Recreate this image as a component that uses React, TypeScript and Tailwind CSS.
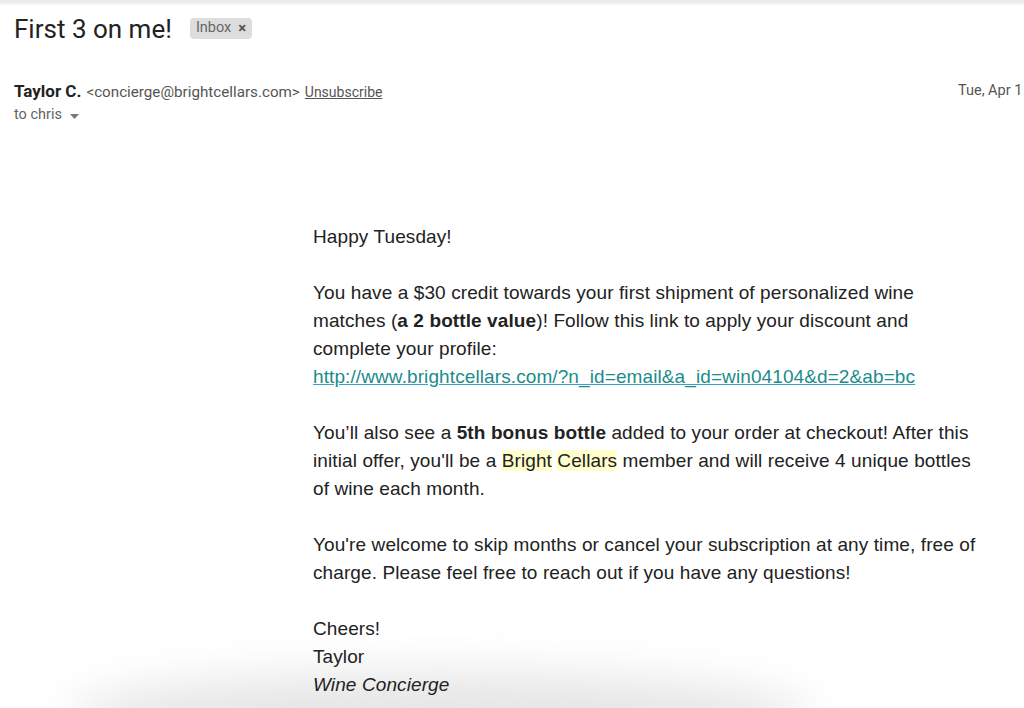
import React from "react";

export default function App() {
  return (
    <div className="relative w-[1024px] h-[708px] overflow-hidden bg-white font-['Liberation_Sans',Arial,sans-serif] text-[#222]">
      <div className="pointer-events-none absolute left-[70px] top-[672px] w-[740px] h-[90px] rounded-[50%] bg-[#e6e6e6] blur-[22px]" />

      <div className="relative">
        <div className="h-[3px] bg-[#ececec]" />
        <div className="h-[2px] bg-[#f6f6f6]" />

        <div className="flex items-center pl-[14px] pt-[9px] h-[40px]">
          <h1 className="font-['Roboto','Liberation_Sans',sans-serif] text-[26px] font-normal text-[#222]">
            First 3 on me!
          </h1>
          <span className="ml-[18px] mt-[-3px] flex items-center gap-[7px] rounded-[4px] bg-[#dddddd] px-[6px] h-[21px] font-['Roboto',sans-serif] text-[14.5px] text-[#666]">
            Inbox
            <span className="text-[15px] font-bold text-[#555] leading-none">×</span>
          </span>
        </div>

        <div className="mt-[34px] flex pl-[14px] font-['Roboto',sans-serif]">
          <div className="flex flex-col">
            <div className="flex items-baseline h-[24px]">
              <span className="text-[17px] font-bold text-[#222]">Taylor C.</span>
              <span className="ml-[5px] text-[15.2px] text-[#555]">&lt;concierge@brightcellars.com&gt;</span>
              <span className="ml-[5px] text-[14px] text-[#555] underline">Unsubscribe</span>
            </div>
            <div className="flex items-center h-[24px] text-[14.5px] text-[#5f6368]">
              to chris
              <svg className="ml-[8px] mt-[2px]" width="9" height="5" viewBox="0 0 9 5">
                <path d="M0 0h9L4.5 5z" fill="#777" />
              </svg>
            </div>
          </div>
          <div className="ml-auto w-[66px] h-[24px] flex items-center overflow-hidden whitespace-nowrap text-[14.5px] text-[#555]">
            Tue, Apr 1
          </div>
        </div>

        <div className="mt-[96px] pl-[313px] pr-[30px] text-[19px] tracking-[0.1px] leading-[28px] text-[#222] font-['Liberation_Sans',Arial,sans-serif]">
          <p>Happy Tuesday!</p>
          <p className="mt-[28px]">
            You have a $30 credit towards your first shipment of personalized wine
            <br />
            matches (<b>a 2 bottle value</b>)! Follow this link to apply your discount and
            <br />
            complete your profile:
            <br />
            <a className="text-[#1a8d8a] underline decoration-[#39a0c8]">
              http://www.brightcellars.com/?n_id=email&amp;a_id=win04104&amp;d=2&amp;ab=bc
            </a>
          </p>
          <p className="mt-[28px]">
            You’ll also see a <b>5th bonus bottle</b> added to your order at checkout! After this
            <br />
            initial offer, you'll be a <span className="bg-[#ffffcc]">Bright</span>{" "}
            <span className="bg-[#ffffcc]">Cellars</span> member and will receive 4 unique bottles
            <br />
            of wine each month.
          </p>
          <p className="mt-[28px]">
            You're welcome to skip months or cancel your subscription at any time, free of
            <br />
            charge. Please feel free to reach out if you have any questions!
          </p>
          <p className="mt-[28px]">
            Cheers!
            <br />
            Taylor
            <br />
            <i>Wine Concierge</i>
          </p>
        </div>
      </div>
    </div>
  );
}
